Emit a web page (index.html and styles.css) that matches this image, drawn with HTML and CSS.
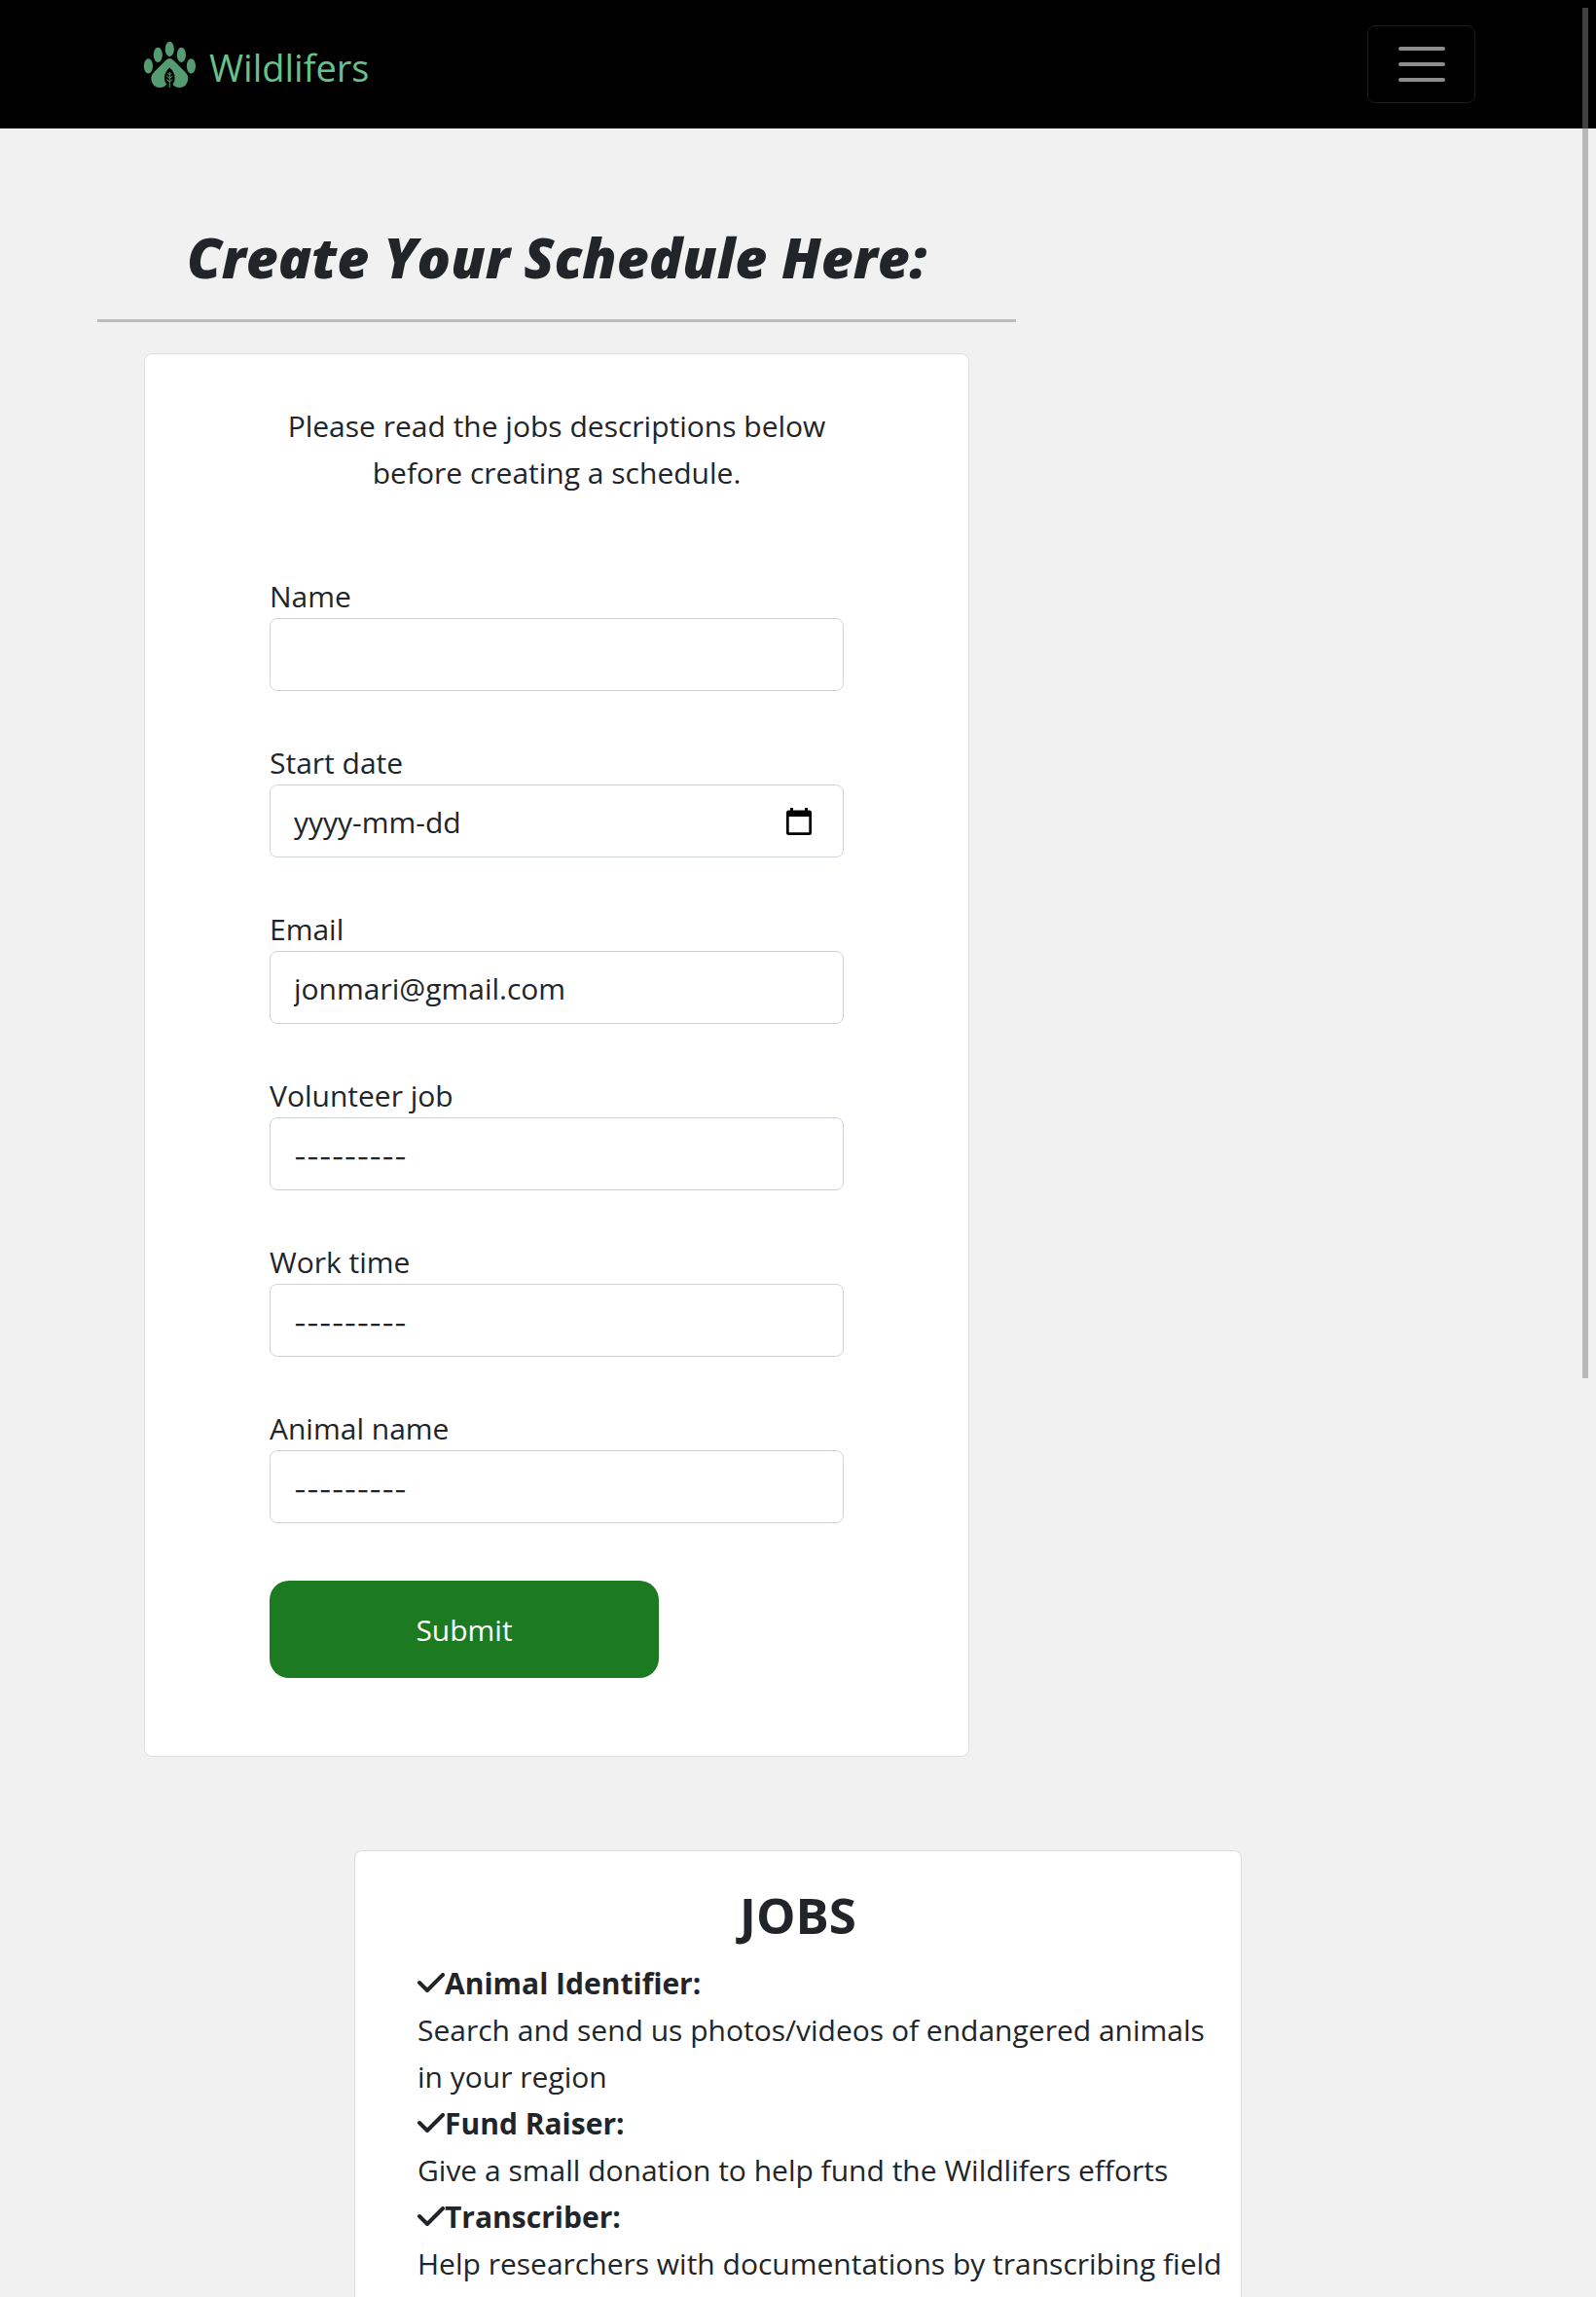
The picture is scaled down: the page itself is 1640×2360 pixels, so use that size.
FILE: index.html
```html
<!DOCTYPE html>
<html lang="en">
<head>
<meta charset="utf-8">
<meta name="viewport" content="width=device-width, initial-scale=1">
<title>Wildlifers</title>
<link rel="stylesheet" href="styles.css">
</head>
<body>
<div class="page">
  <header class="navbar">
    <a class="brand" href="#">
      <svg class="brand-icon" viewBox="0 0 54 48" aria-hidden="true">
        <ellipse cx="27.3" cy="8.4" rx="4.6" ry="7.6"/>
        <ellipse cx="15.3" cy="14.4" rx="4.6" ry="7.6"/>
        <ellipse cx="39.4" cy="14.4" rx="4.6" ry="7.6"/>
        <ellipse cx="5.4" cy="25.8" rx="4.6" ry="7.6"/>
        <ellipse cx="49.4" cy="25.8" rx="4.6" ry="7.6"/>
        <path d="M27.3 18q2 0 4 2l12 12c2.500 2.500 3.500 5 2.700 8.500-.8 4.500-4 7.500-8.700 7.500-3 0-5.500-1.300-7-3.500 1.600-1.500 2.300-3.600 2.300-6.500 0-4-1.800-7.500-5.300-10.500-3.500 3-5.300 6.500-5.300 10.500 0 2.900.7 5 2.300 6.500-1.500 2.200-4 3.500-7 3.500-4.700 0-7.900-3-8.700-7.500C7.800 37 8.800 34.500 11.300 32l12-12q2-2 4-2z"/>
        <path class="leaf" d="M27.300 32v16M27.300 35l-2-2M27.300 35l2-2M27.300 38.500l-3-2.500M27.300 38.500l3-2.500M27.300 42l-3-2.500M27.300 42l3-2.500"/>
      </svg>
      <span class="brand-name">Wildlifers</span>
    </a>
    <button class="toggler" type="button" aria-label="Toggle navigation">
      <svg class="toggler-icon" viewBox="0 0 60 60" aria-hidden="true"><path d="M8 14h44M8 30h44M8 46h44"/></svg>
    </button>
  </header>

  <main>
    <section class="schedule">
      <h1>Create Your Schedule Here:</h1>
      <hr>
      <div class="card form-card">
        <p class="intro">Please read the jobs descriptions below before creating a schedule.</p>
        <form>
          <div class="field">
            <label for="name">Name</label>
            <input id="name" type="text">
          </div>
          <div class="field">
            <label for="start">Start date</label>
            <div class="date-box">
              <input id="start" type="text" placeholder="yyyy-mm-dd">
              <button class="date-button" type="button" aria-label="Show date picker">
                <svg viewBox="0 0 26 28" aria-hidden="true"><path fill-rule="evenodd" d="M4 0h3v2.500h12V0h3v2.500h1.500A2.500 2.500 0 0 1 26 5v20.500a2.500 2.500 0 0 1-2.500 2.500h-21A2.500 2.500 0 0 1 0 25.500V5a2.500 2.500 0 0 1 2.500-2.500H4zM2.700 9v16.300h20.600V9z"/></svg>
              </button>
            </div>
          </div>
          <div class="field">
            <label for="email">Email</label>
            <input id="email" type="email" value="jonmari@gmail.com">
          </div>
          <div class="field">
            <label for="job">Volunteer job</label>
            <select id="job"><option>---------</option></select>
          </div>
          <div class="field">
            <label for="time">Work time</label>
            <select id="time"><option>---------</option></select>
          </div>
          <div class="field">
            <label for="animal">Animal name</label>
            <select id="animal"><option>---------</option></select>
          </div>
          <button class="submit" type="submit">Submit</button>
        </form>
      </div>
    </section>

    <section class="card jobs">
      <h2>JOBS</h2>
      <dl>
        <dt><svg class="check" viewBox="0 0 28 22" aria-hidden="true"><path d="M2 10l8 8L26 2"/></svg>Animal Identifier:</dt>
        <dd>Search and send us photos/videos of endangered animals in your region</dd>
        <dt><svg class="check" viewBox="0 0 28 22" aria-hidden="true"><path d="M2 10l8 8L26 2"/></svg>Fund Raiser:</dt>
        <dd>Give a small donation to help fund the Wildlifers efforts</dd>
        <dt><svg class="check" viewBox="0 0 28 22" aria-hidden="true"><path d="M2 10l8 8L26 2"/></svg>Transcriber:</dt>
        <dd>Help researchers with documentations by transcribing field</dd>
      </dl>
    </section>
  </main>
</div>
<div class="scroll-thumb"></div>
</body>
</html>
```
FILE: styles.css
```css
* { box-sizing: border-box; }

body {
  margin: 0;
  background: #f1f1f1;
  color: #212529;
  font-family: "Open Sans", "Noto Sans", sans-serif;
  font-size: 30px;
  line-height: 48px;
}

.page {
  height: 100vh;
  overflow-y: auto;
  scrollbar-width: none;
}

.navbar {
  display: flex;
  align-items: center;
  justify-content: space-between;
  height: 132px;
  padding: 0 124px 0 147px;
  background: #000;
}

.brand {
  display: flex;
  align-items: center;
  gap: 14px;
  color: #66c18c;
  font-size: 38px;
  text-decoration: none;
}

.brand-name {
  padding-top: 6px;
}

.brand-icon {
  width: 54px;
  height: 48px;
  fill: #569c71;
}

.brand-icon .leaf {
  fill: none;
  stroke: #569c71;
  stroke-width: 1;
}

.toggler {
  display: flex;
  align-items: center;
  justify-content: center;
  width: 111px;
  height: 80px;
  padding: 0;
  border: 1px solid #1c1c1c;
  border-radius: 8px;
  background: transparent;
}

.toggler-icon {
  width: 60px;
  height: 60px;
  fill: none;
  stroke: #8c8c8c;
  stroke-width: 4;
  stroke-linecap: round;
}

.schedule {
  max-width: 944px;
  margin: 98px 0 96px 100px;
}

h1, h2, p, dl, dd { margin: 0; }

h1 {
  font-size: 57px;
  font-style: italic;
  font-weight: 800;
  line-height: 68px;
  text-align: center;
}

hr {
  height: 3px;
  margin: 30px 0 32px;
  border: 0;
  background: #babcbe;
}

.card {
  border: 1px solid #dedede;
  border-radius: 8px;
  background: #fff;
}

.form-card {
  margin: 0 48px;
  padding: 50px 128px 80px;
}

.intro {
  margin-bottom: 77px;
  text-align: center;
}

.field {
  display: flex;
  flex-direction: column;
  margin-bottom: 48px;
}

label {
  padding-top: 4px;
  line-height: 44px;
}

input, select {
  width: 100%;
  height: 75px;
  padding: 2px 24px 0;
  border: 1px solid #ced4da;
  border-radius: 8px;
  background: #fff;
  color: #212529;
  font: inherit;
  appearance: none;
}

select {
  padding-top: 6px;
  font-family: Inter, sans-serif;
  font-size: 28px;
}

input::placeholder {
  color: #212529;
  opacity: 1;
}

.date-box {
  display: flex;
  align-items: center;
  border: 1px solid #ced4da;
  border-radius: 8px;
}

.date-box input {
  flex: 1;
  height: 73px;
  border: 0;
}

.date-button {
  display: flex;
  padding: 0;
  margin-right: 32px;
  border: 0;
  background: none;
}

.date-button svg {
  width: 26px;
  height: 28px;
}

.submit {
  display: block;
  width: 400px;
  height: 100px;
  margin-top: 59px;
  padding: 2px 0 0;
  border: 0;
  border-radius: 20px;
  background: #1c7a20;
  color: #fff;
  font: inherit;
}

.jobs {
  width: 912px;
  max-width: 100%;
  margin: 0 auto;
  padding: 32px 12px 96px 64px;
}

.jobs h2 {
  padding-right: 52px;
  margin-bottom: 14px;
  font-size: 51px;
  line-height: 66px;
  text-align: center;
}

dt {
  display: flex;
  align-items: center;
  font-weight: 700;
}

.check {
  width: 28px;
  height: 22px;
  fill: none;
  stroke: #212529;
  stroke-width: 4;
  stroke-linecap: round;
  stroke-linejoin: round;
}

.scroll-thumb {
  position: fixed;
  top: 8px;
  right: 8px;
  bottom: 40vh;
  width: 6px;
  background: rgba(128, 128, 128, .5);
}
```
